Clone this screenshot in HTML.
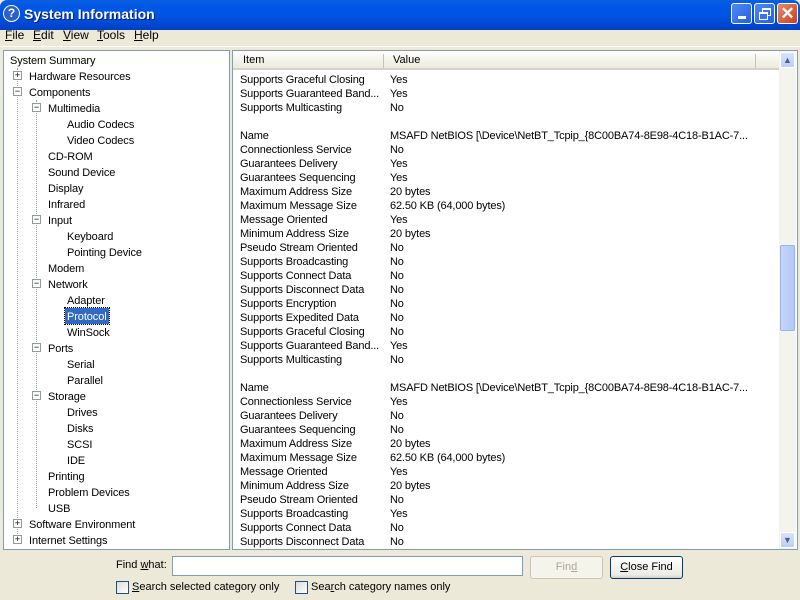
<!DOCTYPE html>
<html><head><meta charset="utf-8"><style>
*{margin:0;padding:0;box-sizing:border-box}
body{width:800px;height:600px;overflow:hidden;background:#ece9d8;font-family:"Liberation Sans",sans-serif;font-size:11px;color:#000;position:relative}
.a{position:absolute;white-space:nowrap}
#title{left:0;top:0;width:800px;height:30px;background:linear-gradient(#0a5fe0,#0058e6 20%,#0054e3 50%,#0046d0 85%,#003fc0);border-radius:7px 7px 0 0}
#title .t{left:24px;top:6px;color:#fff;font-weight:bold;font-size:14px;text-shadow:1px 1px #0a1e6e}
.ic{left:3px;top:5px;width:17px;height:17px;border-radius:50%;background:#2b5fc9;border:1.5px solid #fff;color:#fff;font-weight:bold;font-size:12px;text-align:center;line-height:14px}
.btn{top:3px;width:21px;height:21px;border:1px solid #fff;border-radius:3px;background:linear-gradient(135deg,#4d8af5,#2361e0)}
.cl{background:linear-gradient(135deg,#e88a6a,#c8401c)}
#menu span{position:absolute;top:28px;font-size:12px}
.pane{background:#fff;border:1px solid #7f9db9}
.tr{position:absolute;height:16px;line-height:18px;letter-spacing:-0.1px}
.bx{position:absolute;width:9px;height:9px;border:1px solid #919b9c;background:#fff;font-size:9px;line-height:6px;text-align:center;color:#000}
.r{position:absolute;left:240px;height:14px;line-height:16px;letter-spacing:-0.15px}
.v{position:absolute;left:390px;height:14px;line-height:16px;letter-spacing:-0.15px}
.hd{left:233px;top:51px;width:546px;height:19px;background:linear-gradient(#fff,#ebeadb);border-bottom:2px solid #d6d3c5}
.cb{position:absolute;width:13px;height:13px;border:1px solid #1c5180;background:linear-gradient(135deg,#dcdcd7,#fff)}
.pb{position:absolute;height:23px;border-radius:3px;text-align:center;line-height:21px}
u{text-decoration:underline}
</style></head><body>
<div id="title" class="a"><div class="a ic">?</div><div class="a t">System Information</div>
<div class="a btn" style="left:731px"><div class="a" style="left:6px;top:12px;width:8px;height:3px;background:#fff"></div></div>
<div class="a btn" style="left:754px"><div class="a" style="left:7px;top:4px;width:9px;height:8px;border:1px solid #fff;border-top-width:2px"></div><div class="a" style="left:4px;top:8px;width:9px;height:8px;border:1px solid #fff;border-top-width:2px;background:#3c72ea"></div></div>
<div class="a btn cl" style="left:777px;color:#fff;font-size:17px;line-height:19px;text-align:center;font-weight:bold">✕</div>
</div>
<div id="menu"><span style="left:5px"><u>F</u>ile</span><span style="left:33px"><u>E</u>dit</span><span style="left:63px"><u>V</u>iew</span><span style="left:97px"><u>T</u>ools</span><span style="left:134px"><u>H</u>elp</span></div>
<div class="a" style="left:0;top:46px;width:800px;height:1px;background:#fff"></div>

<div class="a pane" style="left:3px;top:50px;width:227px;height:500px"></div>
<div class="a" style="left:17px;top:68px;height:472px;border-left:1px dotted #a0a0a0"></div>
<div class="a" style="left:36px;top:100px;height:408px;border-left:1px dotted #a0a0a0"></div>
<div class="tr" style="left:10px;top:52px">System Summary</div>
<div class="bx" style="left:13px;top:71px">+</div><div class="tr" style="left:29px;top:68px">Hardware Resources</div>
<div class="bx" style="left:13px;top:87px">−</div><div class="tr" style="left:29px;top:84px">Components</div>
<div class="bx" style="left:32px;top:103px">−</div><div class="tr" style="left:48px;top:100px">Multimedia</div>
<div class="tr" style="left:67px;top:116px">Audio Codecs</div>
<div class="tr" style="left:67px;top:132px">Video Codecs</div>
<div class="tr" style="left:48px;top:148px">CD-ROM</div>
<div class="tr" style="left:48px;top:164px">Sound Device</div>
<div class="tr" style="left:48px;top:180px">Display</div>
<div class="tr" style="left:48px;top:196px">Infrared</div>
<div class="bx" style="left:32px;top:215px">−</div><div class="tr" style="left:48px;top:212px">Input</div>
<div class="tr" style="left:67px;top:228px">Keyboard</div>
<div class="tr" style="left:67px;top:244px">Pointing Device</div>
<div class="tr" style="left:48px;top:260px">Modem</div>
<div class="bx" style="left:32px;top:279px">−</div><div class="tr" style="left:48px;top:276px">Network</div>
<div class="tr" style="left:67px;top:292px">Adapter</div>
<div class="tr" style="left:65px;top:308px;background:#316ac5;color:#fff;padding:0 2px;outline:1px dotted #000">Protocol</div>
<div class="tr" style="left:67px;top:324px">WinSock</div>
<div class="bx" style="left:32px;top:343px">−</div><div class="tr" style="left:48px;top:340px">Ports</div>
<div class="tr" style="left:67px;top:356px">Serial</div>
<div class="tr" style="left:67px;top:372px">Parallel</div>
<div class="bx" style="left:32px;top:391px">−</div><div class="tr" style="left:48px;top:388px">Storage</div>
<div class="tr" style="left:67px;top:404px">Drives</div>
<div class="tr" style="left:67px;top:420px">Disks</div>
<div class="tr" style="left:67px;top:436px">SCSI</div>
<div class="tr" style="left:67px;top:452px">IDE</div>
<div class="tr" style="left:48px;top:468px">Printing</div>
<div class="tr" style="left:48px;top:484px">Problem Devices</div>
<div class="tr" style="left:48px;top:500px">USB</div>
<div class="bx" style="left:13px;top:519px">+</div><div class="tr" style="left:29px;top:516px">Software Environment</div>
<div class="bx" style="left:13px;top:535px">+</div><div class="tr" style="left:29px;top:532px">Internet Settings</div>

<div class="a pane" style="left:232px;top:50px;width:566px;height:500px"></div>
<div class="a hd"><span class="a" style="left:10px;top:3px">Item</span><span class="a" style="left:160px;top:3px">Value</span><div class="a" style="left:150px;top:3px;width:1px;height:14px;background:#c7c5b2"></div><div class="a" style="left:522px;top:3px;width:1px;height:14px;background:#c7c5b2"></div></div>
<div class="a" style="left:779px;top:51px;width:17px;height:498px;background:#f4f3ee"></div>
<div class="a" style="left:780px;top:52px;width:15px;height:16px;border-radius:2px;background:linear-gradient(#d8e4fc,#bccdf8);border:1px solid #fff;color:#4d6185;font-size:9px;text-align:center;line-height:14px">▲</div>
<div class="a" style="left:780px;top:532px;width:15px;height:16px;border-radius:2px;background:linear-gradient(#d8e4fc,#bccdf8);border:1px solid #fff;color:#4d6185;font-size:9px;text-align:center;line-height:14px">▼</div>
<div class="a" style="left:780px;top:245px;width:15px;height:86px;border-radius:2px;background:linear-gradient(90deg,#c6d5fc,#b3c8f7);border:1px solid #99b3ee"></div>

<div class="r" style="top:72px">Supports Graceful Closing</div><div class="v" style="top:72px">Yes</div>
<div class="r" style="top:86px">Supports Guaranteed Band...</div><div class="v" style="top:86px">Yes</div>
<div class="r" style="top:100px">Supports Multicasting</div><div class="v" style="top:100px">No</div>
<div class="r" style="top:128px">Name</div><div class="v" style="top:128px">MSAFD NetBIOS [\Device\NetBT_Tcpip_{8C00BA74-8E98-4C18-B1AC-7...</div>
<div class="r" style="top:142px">Connectionless Service</div><div class="v" style="top:142px">No</div>
<div class="r" style="top:156px">Guarantees Delivery</div><div class="v" style="top:156px">Yes</div>
<div class="r" style="top:170px">Guarantees Sequencing</div><div class="v" style="top:170px">Yes</div>
<div class="r" style="top:184px">Maximum Address Size</div><div class="v" style="top:184px">20 bytes</div>
<div class="r" style="top:198px">Maximum Message Size</div><div class="v" style="top:198px">62.50 KB (64,000 bytes)</div>
<div class="r" style="top:212px">Message Oriented</div><div class="v" style="top:212px">Yes</div>
<div class="r" style="top:226px">Minimum Address Size</div><div class="v" style="top:226px">20 bytes</div>
<div class="r" style="top:240px">Pseudo Stream Oriented</div><div class="v" style="top:240px">No</div>
<div class="r" style="top:254px">Supports Broadcasting</div><div class="v" style="top:254px">No</div>
<div class="r" style="top:268px">Supports Connect Data</div><div class="v" style="top:268px">No</div>
<div class="r" style="top:282px">Supports Disconnect Data</div><div class="v" style="top:282px">No</div>
<div class="r" style="top:296px">Supports Encryption</div><div class="v" style="top:296px">No</div>
<div class="r" style="top:310px">Supports Expedited Data</div><div class="v" style="top:310px">No</div>
<div class="r" style="top:324px">Supports Graceful Closing</div><div class="v" style="top:324px">No</div>
<div class="r" style="top:338px">Supports Guaranteed Band...</div><div class="v" style="top:338px">Yes</div>
<div class="r" style="top:352px">Supports Multicasting</div><div class="v" style="top:352px">No</div>
<div class="r" style="top:380px">Name</div><div class="v" style="top:380px">MSAFD NetBIOS [\Device\NetBT_Tcpip_{8C00BA74-8E98-4C18-B1AC-7...</div>
<div class="r" style="top:394px">Connectionless Service</div><div class="v" style="top:394px">Yes</div>
<div class="r" style="top:408px">Guarantees Delivery</div><div class="v" style="top:408px">No</div>
<div class="r" style="top:422px">Guarantees Sequencing</div><div class="v" style="top:422px">No</div>
<div class="r" style="top:436px">Maximum Address Size</div><div class="v" style="top:436px">20 bytes</div>
<div class="r" style="top:450px">Maximum Message Size</div><div class="v" style="top:450px">62.50 KB (64,000 bytes)</div>
<div class="r" style="top:464px">Message Oriented</div><div class="v" style="top:464px">Yes</div>
<div class="r" style="top:478px">Minimum Address Size</div><div class="v" style="top:478px">20 bytes</div>
<div class="r" style="top:492px">Pseudo Stream Oriented</div><div class="v" style="top:492px">No</div>
<div class="r" style="top:506px">Supports Broadcasting</div><div class="v" style="top:506px">Yes</div>
<div class="r" style="top:520px">Supports Connect Data</div><div class="v" style="top:520px">No</div>
<div class="r" style="top:534px">Supports Disconnect Data</div><div class="v" style="top:534px">No</div>

<div class="a" style="left:116px;top:559px">Find <u>w</u>hat:</div>
<div class="a" style="left:172px;top:556px;width:351px;height:20px;background:#fff;border:1px solid #7f9db9"></div>
<div class="pb" style="left:530px;top:556px;width:73px;border:1px solid #c9c7ba;color:#aca899;background:#f5f4ea">Fin<u>d</u></div>
<div class="pb" style="left:610px;top:556px;width:73px;border:1px solid #003c74;background:linear-gradient(#fff,#ecebe6 85%,#d6d0c5)"><u>C</u>lose Find</div>
<div class="cb" style="left:116px;top:581px"></div><div class="a" style="left:132px;top:581px"><u>S</u>earch selected category only</div>
<div class="cb" style="left:295px;top:581px"></div><div class="a" style="left:311px;top:581px">Sea<u>r</u>ch category names only</div>
</body></html>
